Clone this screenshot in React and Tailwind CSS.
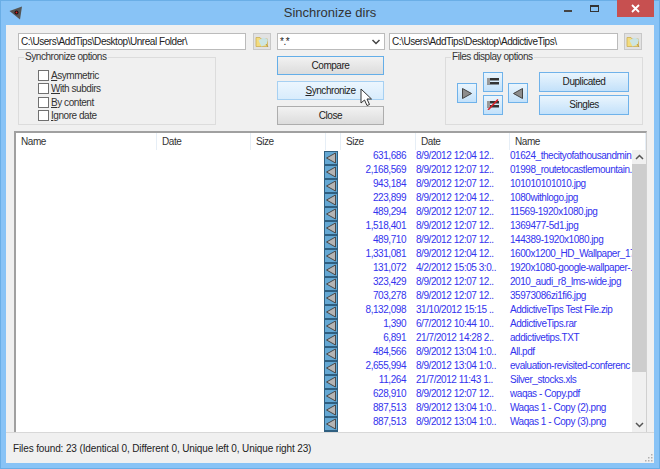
import React from 'react';

const rows = [
  ['631,686', '8/9/2012 12:04 12..', '01624_thecityofathousandmin'],
  ['2,168,569', '8/9/2012 12:07 12..', '01998_routetocastlemountain..'],
  ['943,184', '8/9/2012 12:07 12..', '101010101010.jpg'],
  ['223,899', '8/9/2012 12:04 12..', '1080withlogo.jpg'],
  ['489,294', '8/9/2012 12:07 12..', '11569-1920x1080.jpg'],
  ['1,518,401', '8/9/2012 12:07 12..', '1369477-5d1.jpg'],
  ['489,710', '8/9/2012 12:07 12..', '144389-1920x1080.jpg'],
  ['1,331,081', '8/9/2012 12:04 12..', '1600x1200_HD_Wallpaper_17'],
  ['131,072', '4/2/2012 15:05 3:0..', '1920x1080-google-wallpaper-..'],
  ['323,429', '8/9/2012 12:07 12..', '2010_audi_r8_lms-wide.jpg'],
  ['703,278', '8/9/2012 12:07 12..', '35973086zi1fi6.jpg'],
  ['8,132,098', '31/10/2012 15:15 ..', 'AddictiveTips Test File.zip'],
  ['1,390', '6/7/2012 10:44 10..', 'AddictiveTips.rar'],
  ['6,891', '21/7/2012 14:28 2..', 'addictivetips.TXT'],
  ['484,566', '8/9/2012 13:04 1:0..', 'All.pdf'],
  ['2,655,994', '8/9/2012 13:04 1:0..', 'evaluation-revisited-conferenc'],
  ['11,264', '21/7/2012 11:43 1..', 'Silver_stocks.xls'],
  ['628,910', '8/9/2012 12:07 12..', 'waqas - Copy.pdf'],
  ['887,513', '8/9/2012 13:04 1:0..', 'Waqas 1 - Copy (2).png'],
  ['887,513', '8/9/2012 13:04 1:0..', 'Waqas 1 - Copy (3).png'],
];

const Folder = () => (
  <button className="w-[18px] h-[17px] bg-[#e2e2e2] border border-[#c8c8c8] flex items-center justify-center">
    <svg width="14" height="13" viewBox="0 0 14 13">
      <path d="M1 2.500h4l1 1.500h6.500v7.500H1z" fill="#f3dc7e" stroke="#cbae55" strokeWidth="0.8" />
      <path d="M3.500 5.500l5-3 4.500 2-1.500 5-5 2z" fill="#c4e6f4" opacity="0.85" />
      <path d="M11 9l2 3" stroke="#b59a45" strokeWidth="1" />
    </svg>
  </button>
);

const Btn = ({ children, variant = 'blue', className = '' }) => {
  const styles = {
    blue: 'border-[#6fb2ea] bg-gradient-to-b from-[#eaf5fd] to-[#c3e1fa]',
    focus: 'border-[#64aee8] bg-gradient-to-b from-[#f2f2f2] to-[#dcdcdc]',
    hover: 'border-[#a6d0f2] bg-gradient-to-b from-[#ecf6fe] to-[#d8ecfc]',
    plain: 'border-[#adadad] bg-gradient-to-b from-[#f2f2f2] to-[#dcdcdc]',
  };
  return (
    <button className={`border flex items-center justify-center text-[10px] text-[#222] ${styles[variant]} ${className}`}>
      {children}
    </button>
  );
};

const Option = ({ letter, rest }) => (
  <label className="flex items-center h-[13.3px] text-[10px] text-[#333]">
    <span className="w-[11px] h-[11px] bg-white border border-[#707070] mr-[2px]" />
    <span><span className="underline">{letter}</span>{rest}</span>
  </label>
);

const Arrow = ({ dir }) => (
  <svg width="12" height="13" viewBox="0 0 12 13">
    <path d={dir === 'left' ? 'M10.500 1.500v10L1.500 6.500z' : 'M1.500 1.500v10l9-5z'} fill="#8d8d8d" stroke="#444" strokeWidth="1" />
  </svg>
);

const ListIcon = ({ crossed }) => (
  <svg width="14" height="11" viewBox="0 0 14 11">
    <rect x="1" y="2" width="12" height="2.500" fill="#333" />
    <rect x="1" y="6" width="12" height="2.500" fill="#333" />
    <rect x="1" y="2" width="3" height="6.500" fill="#999" />
    {crossed && <path d="M2 11L12 0.500" stroke="#d8232a" strokeWidth="1.600" />}
  </svg>
);

const Legend = ({ children, className = '' }) => (
  <span className={`absolute top-[-8px] bg-[#f0f0f0] px-px text-[10px] leading-[14px] text-[#333] ${className}`}>{children}</span>
);

const Header = ({ className = '', children }) => (
  <div className={`h-full border-r border-[#e6eef6] flex items-center pl-[5px] shrink-0 ${className}`}>{children}</div>
);

export default function App() {
  return (
    <div className="relative w-[660px] h-[469px] bg-[#88c3f6] flex flex-col overflow-hidden ring-1 ring-inset ring-[#6aaee6] tracking-[-0.45px]" style={{ fontFamily: '"Liberation Sans", Arial, sans-serif' }}>
      {/* title bar */}
      <div className="h-[25px] shrink-0 flex items-center relative pl-[8px]">
        <svg width="14" height="14" viewBox="0 0 14 14" className="ml-px">
          <path d="M0.500 5L13 0.500 11 13.500z" fill="#555" />
          <circle cx="7.500" cy="6.500" r="2" fill="#111" />
          <circle cx="7.500" cy="6.500" r="1" fill="#d22" />
        </svg>
        <div className="absolute left-0 right-0 top-[4px] text-center text-[13px] leading-[18px] tracking-normal text-[#333]">Sinchronize dirs</div>
        <div className="absolute right-[6px] top-0 flex items-start">
          <div className="w-[27px] h-[17px] flex items-center justify-center pt-[5px]"><div className="w-[8px] h-[2px] bg-[#444]" /></div>
          <div className="w-[27px] h-[17px] flex items-center justify-center"><div className="w-[9px] h-[7px] border border-t-2 border-[#333]" /></div>
          <div className="w-[37px] h-[17px] ml-[9px] bg-[#c75050] flex items-center justify-center text-white">
            <svg width="9" height="9" viewBox="0 0 9 9"><path d="M1 1l7 7M8 1l-7 7" stroke="#fff" strokeWidth="1.800" /></svg>
          </div>
        </div>
      </div>

      {/* client area */}
      <div className="mx-[6px] mb-[6px] flex-1 min-h-0 bg-[#f0f0f0] flex flex-col">
        {/* path row */}
        <div className="flex items-center h-[17px] mt-[8px] ml-[12px] shrink-0">
          <div className="w-[228px] h-full bg-white border border-[#bbbbbb] text-[10px] leading-[15px] pl-[2px] text-[#222]">C:\Users\AddTips\Desktop\Unreal Folder\</div>
          <div className="ml-[7px]"><Folder /></div>
          <div className="ml-[6px] w-[108px] h-full bg-white border border-[#bbbbbb] text-[10px] leading-[15px] pl-[2px] text-[#222] flex justify-between">
            <span>*.*</span>
            <svg width="16" height="15" viewBox="0 0 16 15"><path d="M4.500 6l3.500 3.500L11.500 6" fill="none" stroke="#444" strokeWidth="1.500" /></svg>
          </div>
          <div className="ml-[4px] w-[229px] h-full bg-white border border-[#bbbbbb] text-[10px] leading-[15px] pl-[2px] text-[#222]">C:\Users\AddTips\Desktop\AddictiveTips\</div>
          <div className="ml-[6px]"><Folder /></div>
        </div>

        {/* options row */}
        <div className="flex h-[70px] mt-[6px] ml-[12px] shrink-0">
          <div className="relative w-[198px] h-[68px] mt-px border border-[#dcdcdc] pl-[19px] pt-[11px]">
            <Legend className="left-[5px]">Synchronize options</Legend>
            <Option letter="A" rest="symmetric" />
            <Option letter="W" rest="ith subdirs" />
            <Option letter="B" rest="y content" />
            <Option letter="I" rest="gnore date" />
          </div>
          <div className="ml-[61px] w-[107px] flex flex-col gap-[6px]">
            <Btn variant="focus" className="h-[19px]">Compare</Btn>
            <Btn variant="hover" className="h-[19px]"><span><span className="underline">S</span>ynchronize</span></Btn>
            <Btn variant="plain" className="h-[19px]">Close</Btn>
          </div>
          <div className="relative ml-[61px] w-[198px] h-[68px] mt-px border border-[#dcdcdc] flex items-center pl-[11px] pt-[4px]">
            <Legend className="left-[5px]">Files display options</Legend>
            <Btn className="w-[20px] h-[20px]"><Arrow dir="right" /></Btn>
            <div className="ml-[6px] flex flex-col gap-[3px]">
              <Btn className="w-[20px] h-[20px]"><ListIcon /></Btn>
              <Btn className="w-[20px] h-[20px]"><ListIcon crossed /></Btn>
            </div>
            <Btn className="ml-[5px] w-[20px] h-[20px]"><Arrow dir="left" /></Btn>
            <div className="ml-[11px] flex flex-col gap-[3px]">
              <Btn className="w-[90px] h-[20px]">Duplicated</Btn>
              <Btn className="w-[90px] h-[20px]">Singles</Btn>
            </div>
          </div>
        </div>

        {/* file table */}
        <div className="ml-[8px] mr-[7px] mt-[5px] h-[301px] shrink-0 bg-white border-l-2 border-t-2 border-r border-[#a0a0a0] border-r-[#d0d0d0] flex flex-col overflow-hidden">
          <div className="h-[17px] shrink-0 flex text-[10px] text-[#333]">
            <Header className="w-[141px]">Name</Header>
            <Header className="w-[94px]">Date</Header>
            <Header className="w-[75px]">Size</Header>
            <Header className="w-[15px]" />
            <Header className="w-[75px]">Size</Header>
            <Header className="w-[94px]">Date</Header>
            <Header className="flex-1">Name</Header>
          </div>
          <div className="flex-1 min-h-0 flex">
            <div className="flex-1 min-w-0 overflow-hidden pt-px">
              {rows.map((r, i) => (
                <div key={i} className="flex h-[14px] text-[10px] leading-[10px] text-[#3333ee]">
                  <div className="w-[308px] shrink-0" />
                  <div className="w-[14px] shrink-0 bg-[#64a8d4] border border-[#2f5f80] flex items-center justify-center">
                    <svg width="12" height="12" viewBox="0 0 12 12"><path d="M10.500 1v10L1.500 6z" fill="#b4b4b4" stroke="#4a4a4a" strokeWidth="1" /></svg>
                  </div>
                  <div className="w-[68px] shrink-0 text-right">{r[0]}</div>
                  <div className="w-[99px] shrink-0 pl-[10px] whitespace-nowrap overflow-hidden">{r[1]}</div>
                  <div className="flex-1 min-w-0 whitespace-nowrap overflow-hidden pl-[5px]">{r[2]}</div>
                </div>
              ))}
              <div className="flex h-[14px]">
                <div className="w-[308px] shrink-0" />
                <div className="w-[14px] shrink-0 bg-[#64a8d4] border border-[#2f5f80]" />
              </div>
            </div>
            <div className="w-[14px] shrink-0 bg-[#f0f0f0] flex flex-col">
              <div className="h-[14px] flex items-center justify-center">
                <svg width="9" height="6" viewBox="0 0 9 6"><path d="M1 5l3.500-3.500L8 5" fill="none" stroke="#555" strokeWidth="1.500" /></svg>
              </div>
              <div className="flex-1 bg-[#cdcdcd] mb-[46px]" />
              <div className="h-[14px] flex items-center justify-center">
                <svg width="9" height="6" viewBox="0 0 9 6"><path d="M1 1l3.500 3.500L8 1" fill="none" stroke="#555" strokeWidth="1.500" /></svg>
              </div>
            </div>
          </div>
        </div>

        {/* status */}
        <div className="flex-1 min-h-0 border-t border-[#d8d8d8] flex items-center pl-[7px] text-[10px] tracking-[-0.12px] text-[#222] relative">
          Files found: 23 (Identical 0, Different 0, Unique left 0, Unique right 23)
          <svg width="10" height="10" viewBox="0 0 10 10" className="absolute right-[1px] bottom-[1px]">
            <path d="M8 2h1.500v1.500H8zM5 5h1.500v1.500H5zM8 5h1.500v1.500H8zM2 8h1.500v1.500H2zM5 8h1.500v1.500H5zM8 8h1.500v1.500H8z" fill="#b0b0b0" />
          </svg>
        </div>
      </div>

      {/* mouse pointer over the Synchronize button */}
      <svg width="13" height="19" viewBox="0 0 13 19" className="absolute left-[360px] top-[88px]">
        <path d="M1 1v14l3.500-3 2.500 5.500 2.500-1L7 11h4.500z" fill="#fff" stroke="#333" strokeWidth="1" />
      </svg>
    </div>
  );
}
